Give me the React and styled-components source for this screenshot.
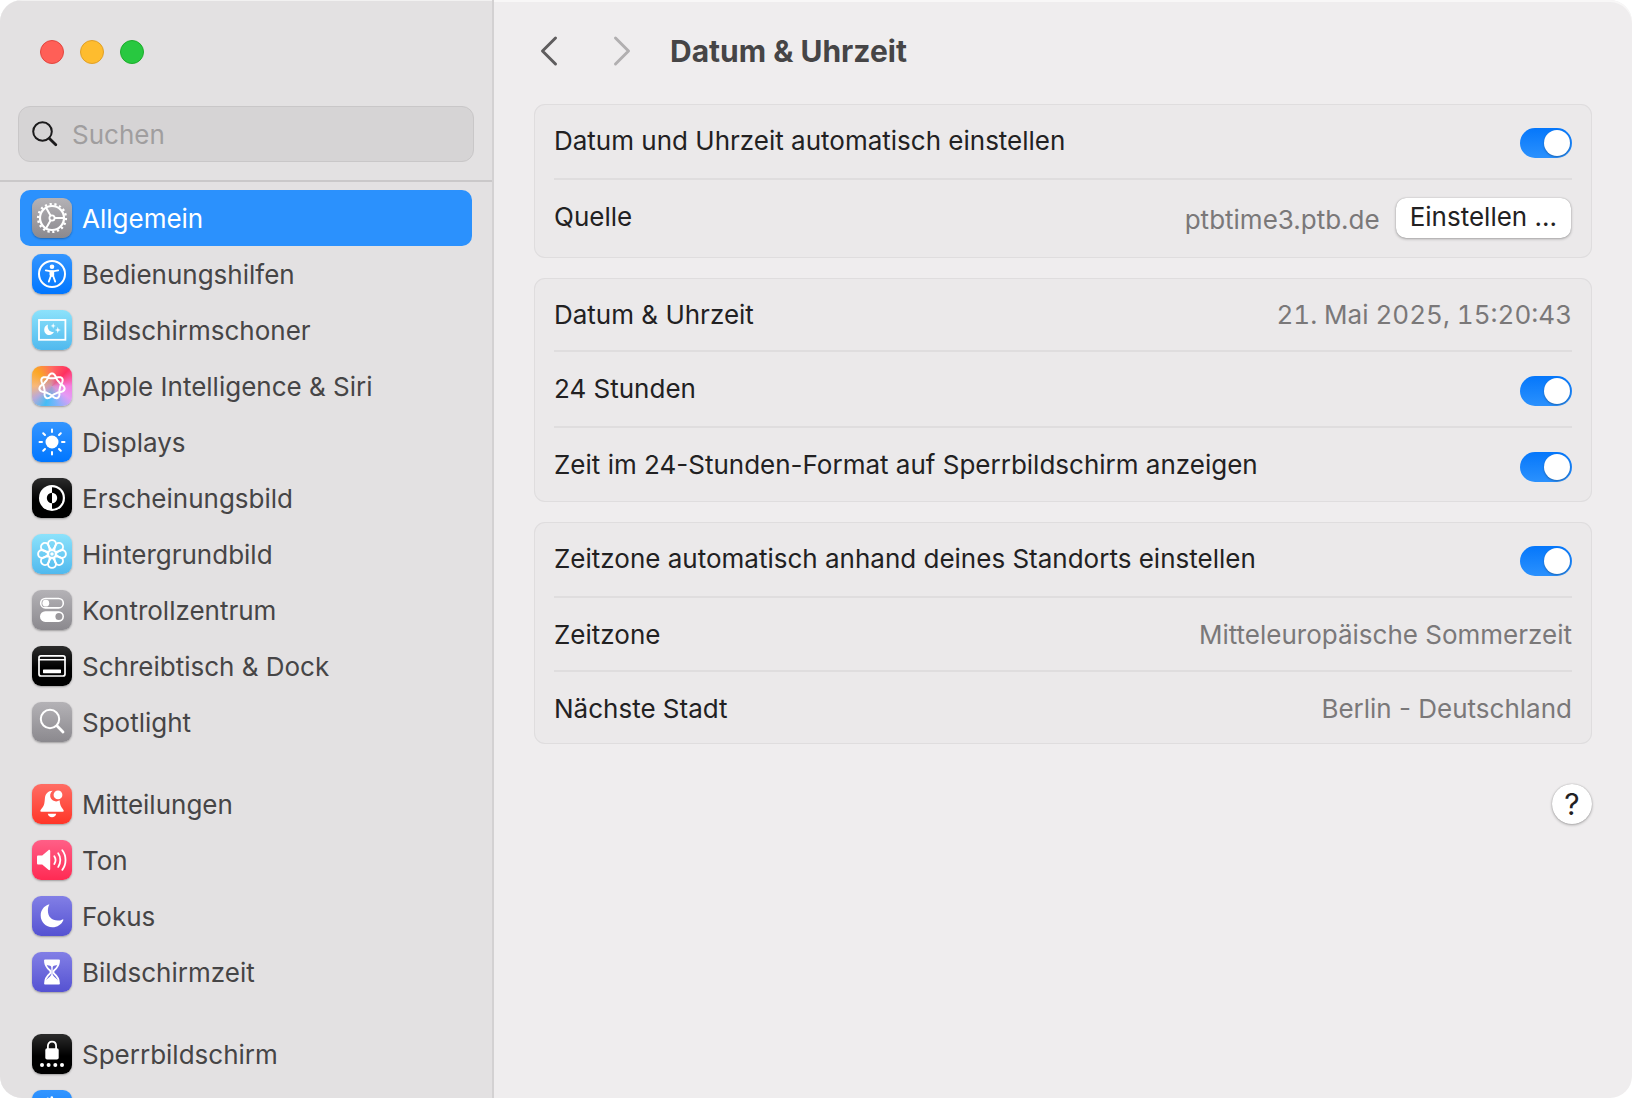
import React, { useState } from "react";
import styled, { createGlobalStyle } from "styled-components";

const GlobalStyle = createGlobalStyle`
  * {
    box-sizing: border-box;
  }
  body {
    margin: 0;
    background: #ffffff;
    font-family: Inter, "Liberation Sans", sans-serif;
    font-size: 26px;
    line-height: 32px;
    color: #222122;
  }
  button, input {
    font: inherit;
    color: inherit;
  }
`;

const Window = styled.div`
  display: flex;
  height: 100vh;
  border-radius: 22px;
  overflow: hidden;
  background: #efedee;
  box-shadow: inset 0 2px 0 #f8f7f7;
`;

const Sidebar = styled.aside`
  flex: none;
  width: 494px;
  display: flex;
  flex-direction: column;
  background: #e3e1e2;
  border-right: 2px solid #d3d1d2;
  box-shadow: inset 0 1px 0 #f2f1f1;
`;

const Lights = styled.div`
  display: flex;
  gap: 16px;
  padding: 40px 40px 42px;
`;

const Light = styled.button`
  width: 24px;
  height: 24px;
  padding: 0;
  border: 1px solid ${(props) => props.$edge};
  border-radius: 50%;
  background: ${(props) => props.$fill};
`;

const SearchBox = styled.label`
  display: flex;
  align-items: center;
  gap: 13px;
  height: 56px;
  margin: 0 18px 18px;
  padding: 0 12px;
  border: 1px solid #c9c7c8;
  border-radius: 12px;
  background: #d6d4d5;
  svg {
    flex: none;
  }
`;

const SearchInput = styled.input`
  flex: 1;
  min-width: 0;
  padding: 2px 0 0;
  border: none;
  outline: none;
  background: none;
  &::placeholder {
    color: #a09e9f;
    opacity: 1;
  }
`;

const NavScroll = styled.nav`
  flex: 1;
  min-height: 0;
  overflow: hidden;
  padding: 8px 20px 0;
  border-top: 2px solid #cac8c9;
`;

const NavGroup = styled.ul`
  list-style: none;
  margin: 0 0 26px;
  padding: 0;
`;

const NavLink = styled.a`
  display: flex;
  align-items: center;
  gap: 10px;
  height: 56px;
  padding: 0 12px;
  border-radius: 10px;
  text-decoration: none;
  color: ${(props) => (props.$active ? "#ffffff" : "#464546")};
  background: ${(props) => (props.$active ? "#2b91fd" : "none")};
`;

const NavText = styled.span`
  padding-top: 2px;
`;

const Tile = styled.span`
  flex: none;
  width: 40px;
  height: 40px;
  border-radius: 9px;
  background: ${(props) => props.$fill};
  box-shadow: 0 1px 2px rgba(0, 0, 0, 0.3);
  svg {
    display: block;
  }
`;

const Main = styled.main`
  flex: 1;
  min-width: 0;
  padding: 0 40px;
`;

const Toolbar = styled.header`
  display: flex;
  align-items: center;
  height: 104px;
`;

const Arrow = styled.button`
  width: 30px;
  height: 40px;
  margin-right: ${(props) => props.$gap};
  padding: 0 0 2px;
  border: none;
  background: none;
  color: #5f5d5e;
  svg {
    display: block;
    margin: 0 auto;
  }
  &:disabled {
    color: #b1afb0;
  }
`;

const Title = styled.h1`
  margin: 0;
  padding-bottom: 2px;
  font-size: 30px;
  font-weight: 700;
  color: #464546;
`;

const Cards = styled.div`
  display: flex;
  flex-direction: column;
  gap: 20px;
`;

const Card = styled.section`
  padding: 0 20px;
  border-radius: 11px;
  background: #ebe9ea;
  box-shadow: inset 0 0 0 1px #dfddde;
`;

const RowBox = styled.div`
  display: flex;
  align-items: center;
  gap: 16px;
  height: ${(props) => props.$height};
  & + & {
    box-sizing: content-box;
    border-top: 2px solid #dfddde;
  }
`;

const RowLabel = styled.label`
  flex: 1;
`;

const RowText = styled.span`
  flex: 1;
  padding-top: ${(props) => (props.$raised ? "0" : "2px")};
  padding-bottom: ${(props) => (props.$raised ? "4px" : "0")};
`;

const Value = styled.span`
  padding-top: 2px;
  color: #7a7879;
  font-variant-numeric: ${(props) => (props.$tabular ? "tabular-nums" : "normal")};
`;

const Switch = styled.input`
  appearance: none;
  flex: none;
  display: flex;
  align-items: center;
  width: 52px;
  height: 30px;
  margin: 4px 0 0;
  padding: 0 2px;
  border-radius: 15px;
  background: #cfcdce;
  &::before {
    content: "";
    width: 26px;
    height: 26px;
    border-radius: 50%;
    background: #ffffff;
    box-shadow: 0 1px 2px rgba(0, 0, 0, 0.3);
  }
  &:checked {
    justify-content: flex-end;
    background: linear-gradient(#0577fb, #2b91fd);
  }
`;

const PushButton = styled.button`
  height: 40px;
  margin: 0 1px 2px 0;
  padding: 0 14px 3px;
  border: none;
  border-radius: 10px;
  background: #ffffff;
  box-shadow: 0 0 1px rgba(0, 0, 0, 0.3), 0 1px 3px rgba(0, 0, 0, 0.3);
`;

const Footer = styled.footer`
  display: flex;
  justify-content: flex-end;
  padding-top: 40px;
`;

const HelpButton = styled.button`
  width: 40px;
  height: 40px;
  padding: 0;
  border: none;
  border-radius: 50%;
  background: #ffffff;
  box-shadow: 0 0 1px rgba(0, 0, 0, 0.3), 0 1px 3px rgba(0, 0, 0, 0.3);
  font-size: 30px;
`;

const GREY = "linear-gradient(#b4b2b6, #8b898e)";
const BLUE = "linear-gradient(#3395ff, #0076ff)";
const SKY = "linear-gradient(#8ce2fb, #50b9ee)";
const BLACK = "linear-gradient(#2c2c2c, #000000 55%)";
const RED = "linear-gradient(#ff6d64, #ff3527)";
const PINK = "linear-gradient(#ff5f87, #ff2a53)";
const INDIGO = "linear-gradient(#827fe6, #5552d2)";
const RAINBOW =
  "radial-gradient(circle at 45% 50%, rgba(200, 150, 190, 0.9), transparent 45%), conic-gradient(from 0deg, #ff6a62, #ff3160 45deg, #f57fe0 90deg, #e39cf5 125deg, #7fb4fb 165deg, #45bdf5 200deg, #b9a9d8 235deg, #f8b97a 270deg, #fba625 315deg, #ff6a62)";

// one closed line that goes round twice, which gives seven crossing loops
const loopPath = () => {
  const points = [];
  for (let i = 0; i < 168; i += 1) {
    const t = (i / 168) * Math.PI * 4;
    const r = 10 + 2.4 * Math.cos(3.5 * t) + 0.5 * Math.cos(7 * t);
    points.push(
      `${(20 + r * Math.sin(t)).toFixed(2)} ${(20.3 - r * Math.cos(t)).toFixed(2)}`
    );
  }
  return `M${points.join("L")}Z`;
};

const Svg = ({ children, size = 40 }) => (
  <svg
    width={size}
    height={size}
    viewBox={`0 0 ${size} ${size}`}
    fill="none"
    stroke="#fff"
    strokeWidth="2"
    strokeLinecap="round"
    strokeLinejoin="round"
    aria-hidden="true"
  >
    {children}
  </svg>
);

const icons = {
  gear: (
    <>
      <circle cx="20" cy="20" r="12" strokeWidth="2.2" />
      <circle cx="20" cy="20" r="13.9" pathLength="36" strokeDasharray="0.9 1.1" strokeWidth="2.4" strokeLinecap="butt" />
      <circle cx="20" cy="20" r="2.6" strokeWidth="1.8" />
      <path d="M23 20H32M18.5 17.4L14 9.6M18.5 22.6L14 30.4" />
    </>
  ),
  access: (
    <>
      <circle cx="20" cy="20" r="13" />
      <circle cx="20" cy="12.8" r="2.3" fill="#fff" stroke="none" />
      <path
        d="M13.8 16.4L18 17.2H22L26.2 16.4M18.8 17.5V22L16.8 27.6M21.2 17.5V22L23.2 27.6"
        strokeWidth="1.8"
      />
      <path d="M18.4 17H21.6V21.6L20 22.6L18.4 21.6Z" fill="#fff" strokeWidth="1" />
    </>
  ),
  saver: (
    <>
      <rect x="7" y="10" width="26.4" height="19.8" strokeLinejoin="miter" strokeWidth="1.8" />
      <path
        d="M16 14.6C14 15.1 12.2 17 12.2 19.7C12.2 22.8 14.5 25 17.3 25C19.6 25 21.3 23.7 22 21.8C18.4 23 14.6 19.2 16 14.6Z"
        fill="#fff"
        stroke="none"
      />
      <path
        d="M21.2 13L21.8 15.2L23.8 15.9L21.8 16.6L21.2 18.8L20.5 16.6L18.5 15.9L20.5 15.2ZM25.8 16.8L26.5 19.3L28.9 20L26.5 20.7L25.8 23.2L25.1 20.7L22.8 20L25.1 19.3Z"
        fill="#fff"
        stroke="none"
      />
    </>
  ),
  siri: <path d={loopPath()} strokeWidth="2" />,
  sun: (
    <>
      <circle cx="20" cy="20" r="6.5" fill="#fff" stroke="none" />
      <path d="M20 7.5V10M20 30V32.5M7.5 20H10M30 20H32.5M11.2 11.2L13 13M27 27L28.8 28.8M11.2 28.8L13 27M27 13L28.8 11.2" />
    </>
  ),
  look: (
    <g stroke="none">
      <circle cx="20" cy="20" r="13" fill="#fff" />
      <path d="M20 9.2A10.8 10.8 0 0 1 20 30.8Z" fill="#000" />
      <path d="M20 14.8A5.2 5.2 0 0 0 20 25.2Z" fill="#000" />
      <path d="M20 14.8A5.2 5.2 0 0 1 20 25.2Z" fill="#fff" />
    </g>
  ),
  flower: (
    <>
      {[0, 45, 90, 135, 180, 225, 270, 315].map((angle) => (
        <g key={angle} transform={`rotate(${angle} 20 20)`}>
          <path
            d="M20 16.6C17.6 14.2 16 12.2 16 10.1A4 4 0 0 1 24 10.1C24 12.2 22.4 14.2 20 16.6Z"
            strokeWidth="1.9"
          />
        </g>
      ))}
      <circle cx="20" cy="20" r="3.8" strokeWidth="1.2" />
      <circle cx="20" cy="20" r="1.8" fill="#fff" stroke="none" />
    </>
  ),
  control: (
    <>
      <rect x="8.7" y="8.5" width="22.6" height="9.4" rx="4.7" strokeWidth="1.6" />
      <circle cx="13.8" cy="13.2" r="3.4" fill="#fff" stroke="none" />
      <rect x="8" y="21.3" width="24" height="10.6" rx="5.3" fill="#fff" stroke="none" />
      <circle cx="26.9" cy="26.6" r="3.5" fill="#9a989c" stroke="none" />
    </>
  ),
  dock: (
    <>
      <rect x="7" y="9.8" width="26" height="20.2" rx="2" strokeWidth="1.7" />
      <path d="M7 13.8H33" strokeWidth="1.5" />
      <rect x="11" y="23.4" width="18" height="3.8" rx="0.6" fill="#fff" stroke="none" />
    </>
  ),
  spot: (
    <>
      <circle cx="18" cy="17" r="9.2" strokeWidth="2" />
      <path d="M24.9 23.8L31 30" strokeWidth="2.8" />
    </>
  ),
  bell: (
    <g stroke="none" fill="#fff">
      <path d="M20.6 6.7C15.9 6.8 13.3 9.8 12.9 14.2C12.5 20.2 12 21.8 9.5 24.7C8 26.5 7.8 27.8 9.5 27.8H30.6C32.3 27.8 32.1 26.5 30.6 24.7C28.7 22.4 28 20.5 27.6 16.3A5.7 5.7 0 0 1 20.6 6.7Z" />
      <circle cx="26" cy="10.9" r="4.4" />
      <path d="M15.8 29.8H24.2C23.8 32 22.2 33.3 20 33.3C17.8 33.3 16.2 32 15.8 29.8Z" />
    </g>
  ),
  sound: (
    <>
      <path
        d="M6.4 15.6H10.2L16.4 10.2C17.2 9.5 18.2 9.8 18.2 10.9V29.1C18.2 30.2 17.2 30.5 16.4 29.8L10.2 24.6H6.4C5.5 24.6 5 24.1 5 23.2V17C5 16.1 5.5 15.6 6.4 15.6Z"
        fill="#fff"
        stroke="none"
      />
      <path
        d="M22.3 16.2C23.8 18.5 23.8 21.7 22.3 24M26.2 13.3C29 17.2 29 23 26.2 26.9M30.3 10.3C34.6 15.8 34.6 24.4 30.3 29.9"
        strokeWidth="1.8"
      />
    </>
  ),
  moon: (
    <path
      d="M17 9.2C17.6 8.7 17.4 8.3 16.5 8.6C11.8 10.2 8.7 14.4 8.7 19.6C8.7 26.2 13.8 31.3 20.4 31.3C25.4 31.3 29.6 28.4 31.3 24.2C31.6 23.4 31.2 23 30.5 23.4C29 24.2 27.5 24.6 25.7 24.6C19.8 24.6 15.9 20.7 15.9 14.8C15.9 12.6 16.2 10.8 17 9.2Z"
      fill="#fff"
      stroke="none"
    />
  ),
  glass: (
    <>
      <path
        d="M13 8.4H27C27 13.2 25.2 15.8 22.2 18.2C21.2 19 21.2 21 22.2 21.8C25.2 24.2 27 26.8 27 31.6H13C13 26.8 14.8 24.2 17.8 21.8C18.8 21 18.8 19 17.8 18.2C14.8 15.8 13 13.2 13 8.4Z"
        strokeWidth="1.8"
      />
      <path
        d="M12.6 8H27.4V10.6C26.6 12.4 25.4 13.6 23 13.6C21.6 13.6 20.7 14.4 20.7 15.8V22.4C21.8 25.4 25.8 26.6 26 28.6V31H14V28.6C14.2 26.6 18.2 25.4 19.3 22.4V15.8C19.3 14.4 18.4 13.6 17 13.6C14.6 13.6 13.4 12.4 12.6 10.6Z"
        fill="#fff"
        stroke="none"
      />
    </>
  ),
  lock: (
    <>
      <path d="M15.9 15V12C15.9 9.3 17.6 7.6 20 7.6C22.4 7.6 24.1 9.3 24.1 12V15" strokeWidth="1.8" />
      <rect x="13.3" y="14.2" width="13.4" height="11.4" rx="1.8" fill="#fff" stroke="none" />
      {[10, 16.6, 23.3, 30].map((x) => (
        <circle key={x} cx={x} cy="31" r="2" fill="#fff" stroke="none" />
      ))}
    </>
  ),
  hand: (
    <path
      d="M12 20V11.5M15.8 18V8.7M19.8 18V7.6M23.8 18V9.2M12 20C12 28 15 32 20 32C24 32 26 29 30 21.5L26 23V12"
      strokeWidth="2.6"
    />
  ),
};

const groups = [
  [
    { label: "Allgemein", icon: "gear", fill: GREY },
    { label: "Bedienungshilfen", icon: "access", fill: BLUE },
    { label: "Bildschirmschoner", icon: "saver", fill: SKY },
    { label: "Apple Intelligence & Siri", icon: "siri", fill: RAINBOW },
    { label: "Displays", icon: "sun", fill: BLUE },
    { label: "Erscheinungsbild", icon: "look", fill: BLACK },
    { label: "Hintergrundbild", icon: "flower", fill: SKY },
    { label: "Kontrollzentrum", icon: "control", fill: GREY },
    { label: "Schreibtisch & Dock", icon: "dock", fill: BLACK },
    { label: "Spotlight", icon: "spot", fill: GREY },
  ],
  [
    { label: "Mitteilungen", icon: "bell", fill: RED },
    { label: "Ton", icon: "sound", fill: PINK },
    { label: "Fokus", icon: "moon", fill: INDIGO },
    { label: "Bildschirmzeit", icon: "glass", fill: INDIGO },
  ],
  [
    { label: "Sperrbildschirm", icon: "lock", fill: BLACK },
    { label: "Datenschutz", icon: "hand", fill: BLUE, iconOnly: true },
  ],
];

const SwitchRow = ({ id, label }) => {
  const [on, setOn] = useState(true);
  return (
    <RowBox $height="74px">
      <RowLabel htmlFor={id}>{label}</RowLabel>
      <Switch
        id={id}
        type="checkbox"
        role="switch"
        checked={on}
        onChange={() => setOn(!on)}
      />
    </RowBox>
  );
};

const ValueRow = ({ label, value, tabular, height = "72px", children }) => (
  <RowBox $height={height}>
    <RowText $raised={Boolean(children)}>{label}</RowText>
    <Value $tabular={tabular}>{value}</Value>
    {children}
  </RowBox>
);

const App = () => {
  const [active, setActive] = useState("Allgemein");
  const [query, setQuery] = useState("");

  return (
    <>
      <GlobalStyle />
      <Window>
        <Sidebar>
          <Lights>
            <Light $fill="#ff5f57" $edge="#e2463f" aria-label="Schließen" />
            <Light $fill="#febc2e" $edge="#e0a028" aria-label="Minimieren" />
            <Light $fill="#28c840" $edge="#1dad2b" aria-label="Zoomen" />
          </Lights>
          <SearchBox>
            <Svg size={28}>
              <g stroke="#1c1b1c">
                <circle cx="11.5" cy="11.5" r="9.3" />
                <path d="M18.4 18.4L24.8 24.8" strokeWidth="2.8" />
              </g>
            </Svg>
            <SearchInput
              type="text"
              placeholder="Suchen"
              aria-label="Suchen"
              value={query}
              onChange={(e) => setQuery(e.target.value)}
            />
          </SearchBox>
          <NavScroll>
            {groups.map((items) => (
              <NavGroup key={items[0].label}>
                {items.map((item) => (
                  <li key={item.label}>
                    <NavLink
                      href="#"
                      aria-label={item.label}
                      $active={item.label === active}
                      onClick={() => setActive(item.label)}
                    >
                      <Tile $fill={item.fill}>
                        <Svg>{icons[item.icon]}</Svg>
                      </Tile>
                      {!item.iconOnly && <NavText>{item.label}</NavText>}
                    </NavLink>
                  </li>
                ))}
              </NavGroup>
            ))}
          </NavScroll>
        </Sidebar>

        <Main>
          <Toolbar>
            <Arrow $gap="43px" aria-label="Zurück">
              <svg width="20" height="32" viewBox="0 0 20 32" fill="none" stroke="currentColor" strokeWidth="3" strokeLinecap="round" strokeLinejoin="round">
                <path d="M16.5 3L3.5 16L16.5 29" />
              </svg>
            </Arrow>
            <Arrow $gap="33px" aria-label="Vorwärts" disabled>
              <svg width="20" height="32" viewBox="0 0 20 32" fill="none" stroke="currentColor" strokeWidth="3" strokeLinecap="round" strokeLinejoin="round">
                <path d="M3.5 3L16.5 16L3.5 29" />
              </svg>
            </Arrow>
            <Title>Datum &amp; Uhrzeit</Title>
          </Toolbar>

          <Cards>
            <Card>
              <SwitchRow id="auto-time" label="Datum und Uhrzeit automatisch einstellen" />
              <ValueRow label="Quelle" value="ptbtime3.ptb.de" height="78px">
                <PushButton>Einstellen ...</PushButton>
              </ValueRow>
            </Card>
            <Card>
              <ValueRow label="Datum & Uhrzeit" value="21. Mai 2025, 15:20:43" tabular />
              <SwitchRow id="hours-24" label="24 Stunden" />
              <SwitchRow id="lock-24" label="Zeit im 24-Stunden-Format auf Sperrbildschirm anzeigen" />
            </Card>
            <Card>
              <SwitchRow id="auto-zone" label="Zeitzone automatisch anhand deines Standorts einstellen" />
              <ValueRow label="Zeitzone" value="Mitteleuropäische Sommerzeit" />
              <ValueRow label="Nächste Stadt" value="Berlin - Deutschland" />
            </Card>
          </Cards>

          <Footer>
            <HelpButton aria-label="Hilfe">?</HelpButton>
          </Footer>
        </Main>
      </Window>
    </>
  );
};

export default App;
